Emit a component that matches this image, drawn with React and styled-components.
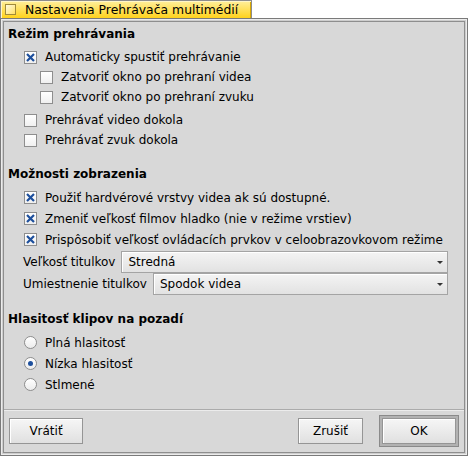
import React, { useState } from "react";
import styled, { createGlobalStyle } from "styled-components";

const GlobalStyle = createGlobalStyle`
  html, body {
    margin: 0;
    padding: 0;
    background: #ffffff;
  }
  body {
    font-family: "DejaVu Sans", "Liberation Sans", sans-serif;
    font-size: 12px;
    color: #000;
  }
`;

const Shell = styled.div`
  width: 468px;
  height: 456px;
  display: flex;
  flex-direction: column;
`;

const Tab = styled.div`
  width: 252px;
  height: 18px;
  box-sizing: border-box;
  border: 1px solid #8c8c8c;
  border-bottom: none;
  background: linear-gradient(#ffef9c, #ffd21c);
  box-shadow: inset 1px 1px 0 #fff6c8, inset -1px 0 0 #d9a800;
  display: flex;
  align-items: center;
  gap: 9px;
  padding-left: 4px;
  font-size: 12.4px;
  line-height: 16px;
  white-space: nowrap;
`;

const CloseBox = styled.span`
  width: 11px;
  height: 11px;
  box-sizing: border-box;
  border: 1px solid #a08a3a;
  background: linear-gradient(135deg, #fffbe0, #ffe066);
`;

const Window = styled.div`
  flex: 1;
  box-sizing: border-box;
  border: 1px solid #7a7a7a;
  box-shadow: inset 0 0 0 1px #ececec, inset 0 0 0 2px #cdcdcd,
    inset 0 0 0 3px #8e8e8e;
  padding: 3px;
  display: flex;
  flex-direction: column;
  background: #d8d8d8;
`;

const Content = styled.div`
  flex: 1;
  padding: 4px 0 0 4px;
  display: flex;
  flex-direction: column;
  gap: 16px;
`;

const Section = styled.section`
  display: flex;
  flex-direction: column;
  gap: 5px;
`;

const Heading = styled.div`
  font-weight: bold;
  line-height: 16px;
`;

const Options = styled.div`
  display: flex;
  flex-direction: column;
  --row: ${p => p.$row}px;
`;

const Group = styled.div`
  display: flex;
  flex-direction: column;
  margin-bottom: ${p => p.$after || 0}px;
`;

const Row = styled.label`
  height: var(--row);
  display: flex;
  align-items: center;
  gap: 8px;
  padding-left: ${p => 16 + (p.$indent ? 16 : 0)}px;
  white-space: nowrap;
`;

const Box = styled.span`
  width: 13px;
  height: 13px;
  box-sizing: border-box;
  border: 1px solid #8e8e8e;
  background: linear-gradient(#ffffff, #f0f0f0);
  display: flex;
  align-items: center;
  justify-content: center;
  flex: none;
`;

const Radio = styled.span`
  width: 13px;
  height: 13px;
  box-sizing: border-box;
  border: 1px solid #8e8e8e;
  border-radius: 50%;
  background: linear-gradient(#ffffff, #ececec);
  display: flex;
  align-items: center;
  justify-content: center;
  flex: none;

  &::after {
    content: "";
    width: 5px;
    height: 5px;
    border-radius: 50%;
    background: ${p => (p.$on ? "#1d4f9c" : "transparent")};
  }
`;

const FieldRow = styled.div`
  height: 22px;
  display: flex;
  align-items: center;
  gap: 6px;
  padding: 0 16px 0 15px;
  white-space: nowrap;
`;

const Fields = styled.div`
  display: flex;
  flex-direction: column;
  margin-top: 1px;
`;

const Select = styled.div`
  flex: 1;
  height: 22px;
  box-sizing: border-box;
  border: 1px solid #a4a4a4;
  background: linear-gradient(#f4f4f4, #e2e2e2);
  box-shadow: inset 1px 1px 0 #ffffff;
  display: flex;
  align-items: center;
  justify-content: space-between;
  padding: 0 4px 0 6px;
`;

const Arrow = styled.span`
  width: 0;
  height: 0;
  border-left: 3px solid transparent;
  border-right: 3px solid transparent;
  border-top: 3px solid #333;
`;

const Footer = styled.div`
  height: 42px;
  border-top: 1px solid #ababab;
  box-shadow: inset 0 1px 0 #ececec;
  display: flex;
  align-items: center;
  padding: 0 5px;
`;

const Spacer = styled.div`
  flex: 1;
`;

const Button = styled.button`
  width: ${p => p.$w}px;
  height: 26px;
  box-sizing: border-box;
  border: 1px solid #959595;
  background: linear-gradient(#f6f6f6, #e0e0e0);
  box-shadow: inset 1px 1px 0 #ffffff;
  font: inherit;
  color: #000;
  padding: 0;
`;

const DefaultFrame = styled.div`
  margin-left: 16px;
  padding: 2px;
  border: 1px solid #8a8a8a;
  background: #b2b2b2;
  display: flex;
`;

const Check = ({ on }) => (
  <Box>
    {on && (
      <svg width="11" height="11" viewBox="0 0 11 11">
        <path d="M2 2 L9 9 M9 2 L2 9" stroke="#1d4f9c" strokeWidth="2.2" />
      </svg>
    )}
  </Box>
);

const CheckRow = ({ on, indent, children }) => (
  <Row $indent={indent}>
    <Check on={on} />
    <span>{children}</span>
  </Row>
);

const App = () => {
  const [volume] = useState("low");

  return (
    <Shell>
      <GlobalStyle />
      <Tab>
        <CloseBox />
        <span>Nastavenia Prehrávača multimédií</span>
      </Tab>
      <Window>
        <Content>
          <Section>
            <Heading>Režim prehrávania</Heading>
            <Options $row={20}>
              <Group $after={3}>
                <CheckRow on>Automaticky spustiť prehrávanie</CheckRow>
                <CheckRow indent>Zatvoriť okno po prehraní videa</CheckRow>
                <CheckRow indent>Zatvoriť okno po prehraní zvuku</CheckRow>
              </Group>
              <CheckRow>Prehrávať video dokola</CheckRow>
              <CheckRow>Prehrávať zvuk dokola</CheckRow>
            </Options>
          </Section>

          <Section>
            <Heading>Možnosti zobrazenia</Heading>
            <Options $row={21}>
              <CheckRow on>Použiť hardvérové vrstvy videa ak sú dostupné.</CheckRow>
              <CheckRow on>Zmeniť veľkosť filmov hladko (nie v režime vrstiev)</CheckRow>
              <CheckRow on>Prispôsobiť veľkosť ovládacích prvkov v celoobrazovkovom režime</CheckRow>
              <Fields>
                <FieldRow>
                  <span>Veľkosť titulkov</span>
                  <Select>
                    <span>Stredná</span>
                    <Arrow />
                  </Select>
                </FieldRow>
                <FieldRow>
                  <span>Umiestnenie titulkov</span>
                  <Select>
                    <span>Spodok videa</span>
                    <Arrow />
                  </Select>
                </FieldRow>
              </Fields>
            </Options>
          </Section>

          <Section>
            <Heading>Hlasitosť klipov na pozadí</Heading>
            <Options $row={21}>
              {[
                ["full", "Plná hlasitosť"],
                ["low", "Nízka hlasitosť"],
                ["mute", "Stlmené"],
              ].map(([key, label]) => (
                <Row key={key}>
                  <Radio $on={volume === key} />
                  <span>{label}</span>
                </Row>
              ))}
            </Options>
          </Section>
        </Content>
        <Footer>
          <Button $w={74}>Vrátiť</Button>
          <Spacer />
          <Button $w={65}>Zrušiť</Button>
          <DefaultFrame>
            <Button $w={74}>OK</Button>
          </DefaultFrame>
        </Footer>
      </Window>
    </Shell>
  );
};

export default App;
